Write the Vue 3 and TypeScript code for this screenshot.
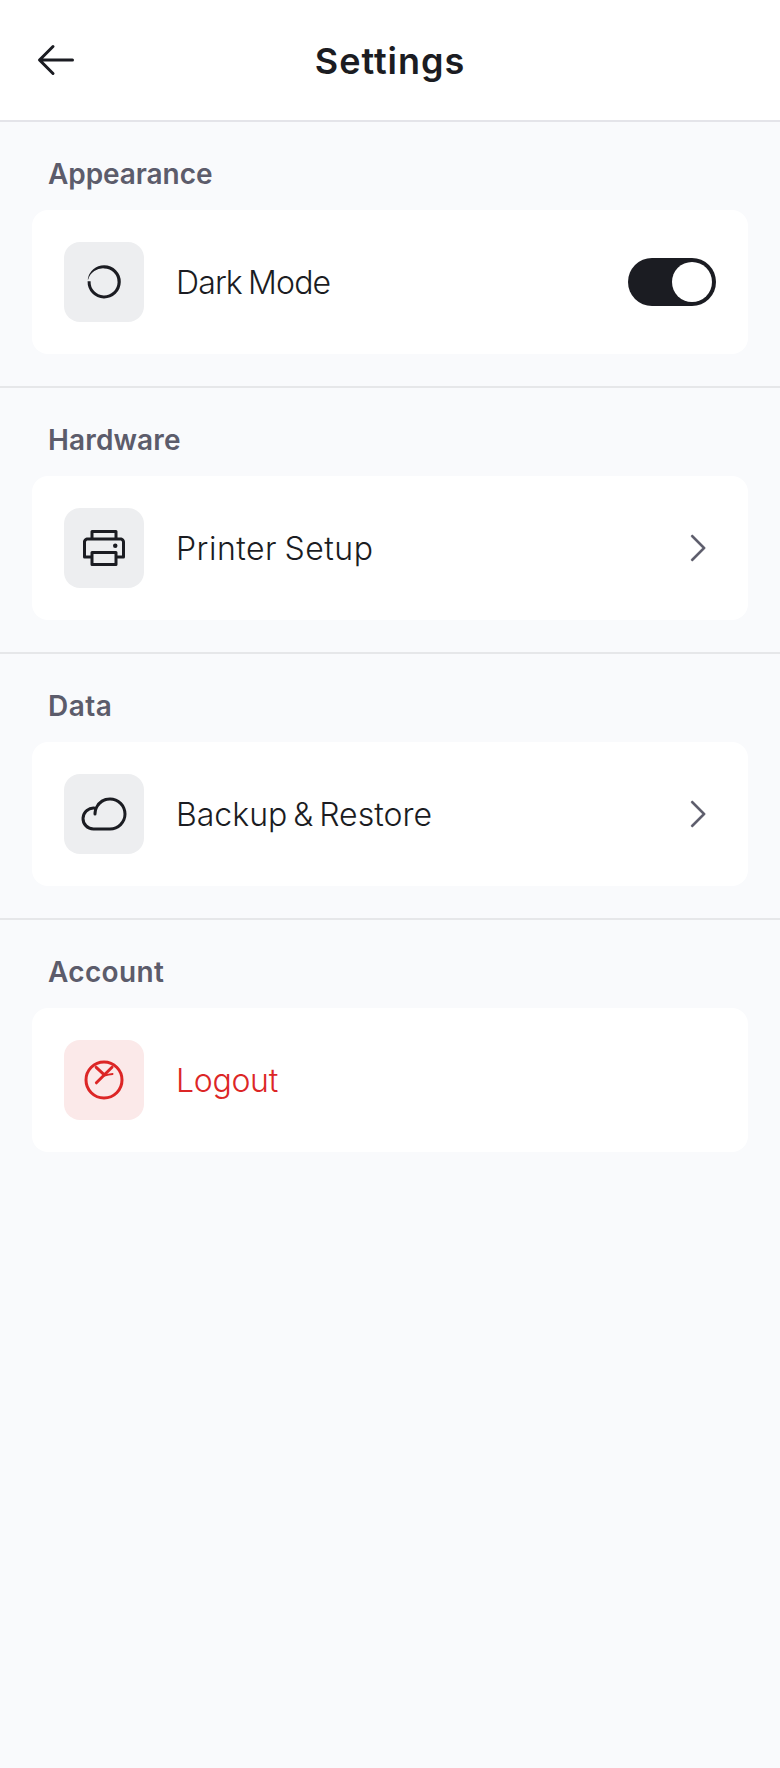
<script setup lang="ts">
import { ref } from 'vue'

type IconName = 'moon' | 'printer' | 'cloud' | 'logout'

interface Section {
  title: string
  titleSpacing: number
  label: string
  labelSpacing: number
  wordSpacing: number
  icon: IconName
  trailing: 'toggle' | 'caret' | 'none'
}

const sections: Section[] = [
  { title: 'Appearance', titleSpacing: -0.08, label: 'Dark Mode', labelSpacing: -0.85, wordSpacing: -2, icon: 'moon', trailing: 'toggle' },
  { title: 'Hardware', titleSpacing: 0.15, label: 'Printer Setup', labelSpacing: 0.5, wordSpacing: -2, icon: 'printer', trailing: 'caret' },
  { title: 'Data', titleSpacing: 0.5, label: 'Backup & Restore', labelSpacing: 0, wordSpacing: -3, icon: 'cloud', trailing: 'caret' },
  { title: 'Account', titleSpacing: 0.35, label: 'Logout', labelSpacing: -0.3, wordSpacing: 0, icon: 'logout', trailing: 'none' },
]

const darkMode = ref(true)
</script>

<template>
  <main class="screen">
    <header class="header">
      <button class="back" aria-label="Back">
        <svg class="icon" viewBox="0 0 256 256"><path d="M224,128a8,8,0,0,1-8,8H59.31l58.35,58.34a8,8,0,0,1-11.32,11.32l-72-72a8,8,0,0,1,0-11.32l72-72a8,8,0,0,1,11.32,11.32L59.31,120H216A8,8,0,0,1,224,128Z" /></svg>
      </button>
      <h1 class="heading">Settings</h1>
    </header>

    <section v-for="s in sections" :key="s.title" class="section">
      <h2 class="title" :style="{ letterSpacing: s.titleSpacing + 'px' }">{{ s.title }}</h2>
      <div class="card" :class="{ danger: s.icon === 'logout' }">
        <div class="tile">
          <svg v-if="s.icon === 'moon'" class="icon" viewBox="0 0 48 48">
            <path d="M7.6 23.2A16.6 16.6 0 1 0 24.2 7.2A16.6 16.6 0 0 0 7.7 21.4L8.2 21.4A15.6 15.6 0 0 1 24.2 10.4A13.5 13.5 0 1 1 10.6 23.2Z" />
          </svg>
          <svg v-else-if="s.icon === 'printer'" class="icon" viewBox="0 0 256 256"><path d="M214.67,72H200V40a8,8,0,0,0-8-8H64a8,8,0,0,0-8,8V72H41.33C27.36,72,16,82.77,16,96v80a8,8,0,0,0,8,8H56v32a8,8,0,0,0,8,8H192a8,8,0,0,0,8-8V184h32a8,8,0,0,0,8-8V96C240,82.77,228.64,72,214.67,72ZM72,48H184V72H72ZM184,208H72V160H184Zm40-40H200V152a8,8,0,0,0-8-8H64a8,8,0,0,0-8,8v16H32V96c0-4.41,4.19-8,9.33-8H214.67c5.14,0,9.33,3.59,9.33,8Zm-24-52a12,12,0,1,1-12-12A12,12,0,0,1,200,116Z" /></svg>
          <svg v-else-if="s.icon === 'cloud'" class="icon" viewBox="0 0 256 256"><path d="M160,40A88.09,88.09,0,0,0,81.29,88.67,64,64,0,1,0,72,216h88a88,88,0,0,0,0-176Zm0,160H72a48,48,0,0,1,0-96c1.1,0,2.2,0,3.29.11A88,88,0,0,0,72,128a8,8,0,0,0,16,0,72,72,0,1,1,72,72Z" /></svg>
          <svg v-else class="icon line" viewBox="0 0 48 48">
            <circle cx="24" cy="24" r="18" />
            <path d="M16.2 11.3L23.8 18.4M32 11.3L16.4 26.8" />
            <path class="thin" d="M24.5 19.5L28.5 18.6L32.6 18" />
          </svg>
        </div>
        <span class="label" :style="{ letterSpacing: s.labelSpacing + 'px', wordSpacing: s.wordSpacing + 'px' }">{{ s.label }}</span>
        <button
          v-if="s.trailing === 'toggle'"
          class="toggle"
          :class="{ on: darkMode }"
          role="switch"
          :aria-checked="darkMode"
          :aria-label="s.label"
          @click="darkMode = !darkMode"
        ><span class="knob"></span></button>
        <svg v-else-if="s.trailing === 'caret'" class="caret" viewBox="0 0 256 256"><path d="M181.66,133.66l-80,80a8,8,0,0,1-11.32-11.32L164.69,128,90.34,53.66a8,8,0,0,1,11.32-11.32l80,80A8,8,0,0,1,181.66,133.66Z" /></svg>
      </div>
    </section>
  </main>
</template>

<style>
body {
  background: #f9fafc;
}
</style>

<style scoped>
.screen {
  box-sizing: border-box;
  min-height: 1768px;
  background: #f9fafc;
  color: #1b1c22;
  font-family: Inter, "Liberation Sans", sans-serif;
}
.header {
  display: grid;
  grid-template-columns: 48px 1fr 48px;
  align-items: center;
  box-sizing: border-box;
  height: 122px;
  padding: 0 32px;
  background: #fff;
  border-bottom: 2px solid #e4e4e9;
}
.back {
  width: 48px;
  height: 48px;
  padding: 0;
  border: 0;
  background: none;
  color: inherit;
}
.icon {
  display: block;
  width: 48px;
  height: 48px;
  fill: currentColor;
}
.heading {
  margin: 0;
  padding-top: 2px;
  font-size: 36px;
  line-height: 48px;
  font-weight: 600;
  letter-spacing: 0.95px;
  text-align: center;
}
.section {
  box-sizing: border-box;
  height: 266px;
  padding: 32px 32px 0;
  border-bottom: 2px solid #e6e7e9;
}
.section:last-child {
  border-bottom: 0;
}
.title {
  margin: 0 0 16px;
  padding-left: 16px;
  font-size: 28px;
  line-height: 40px;
  font-weight: 600;
  color: #5c5c6b;
}
.card {
  display: flex;
  align-items: center;
  gap: 32px;
  box-sizing: border-box;
  height: 144px;
  padding: 32px;
  border-radius: 16px;
  background: #fff;
}
.tile {
  display: grid;
  place-items: center;
  flex: none;
  width: 80px;
  height: 80px;
  border-radius: 16px;
  background: #edeef0;
}
.label {
  flex: 1;
  padding-top: 2px;
  font-size: 32px;
  line-height: 44px;
  font-weight: 300;
  white-space: nowrap;
}
.danger {
  color: #dc2626;
}
.danger .tile {
  background: #fbe9e9;
}
.line {
  fill: none;
  stroke: currentColor;
  stroke-width: 3;
  stroke-linecap: round;
  stroke-linejoin: round;
}
.thin {
  stroke-width: 1.8;
}
.toggle {
  display: flex;
  box-sizing: border-box;
  width: 88px;
  height: 48px;
  padding: 4px;
  border: 0;
  border-radius: 24px;
  background: #c9cad0;
}
.toggle.on {
  justify-content: flex-end;
  background: #1b1c22;
}
.knob {
  width: 40px;
  height: 40px;
  border-radius: 50%;
  background: #fff;
}
.caret {
  width: 38px;
  height: 38px;
  fill: #5c5c6b;
  stroke: #5c5c6b;
  stroke-width: 2;
}
</style>
